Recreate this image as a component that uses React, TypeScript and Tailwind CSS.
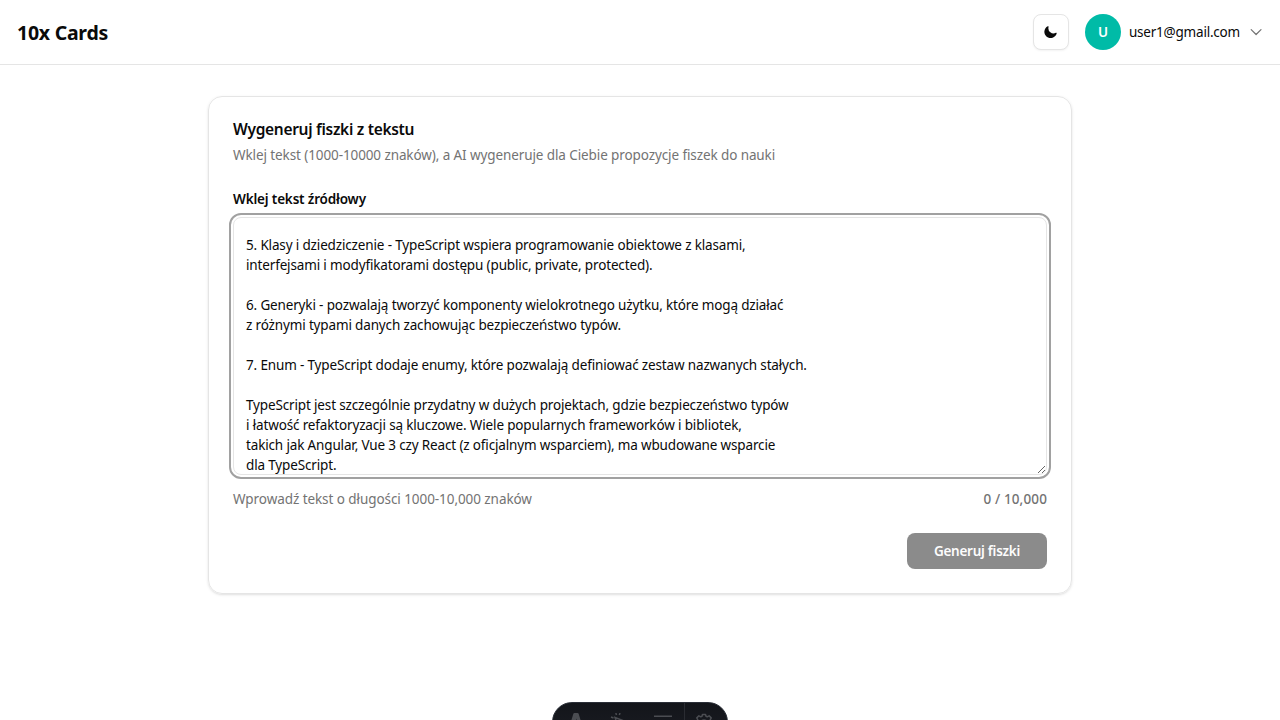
const lines = [
  '5. Klasy i dziedziczenie - TypeScript wspiera programowanie obiektowe z klasami,',
  'interfejsami i modyfikatorami dostępu (public, private, protected).',
  '',
  '6. Generyki - pozwalają tworzyć komponenty wielokrotnego użytku, które mogą działać',
  'z różnymi typami danych zachowując bezpieczeństwo typów.',
  '',
  '7. Enum - TypeScript dodaje enumy, które pozwalają definiować zestaw nazwanych stałych.',
  '',
  'TypeScript jest szczególnie przydatny w dużych projektach, gdzie bezpieczeństwo typów',
  'i łatwość refaktoryzacji są kluczowe. Wiele popularnych frameworków i bibliotek,',
  'takich jak Angular, Vue 3 czy React (z oficjalnym wsparciem), ma wbudowane wsparcie',
  'dla TypeScript.',
];

function Header() {
  return (
    <header className="flex h-[65px] items-center justify-between border-b border-[#e5e5e5] pr-4 pl-[17px]">
      <span className="pt-px text-[19.5px] leading-7 font-bold tracking-[-0.25px]">10x Cards</span>
      <div className="flex items-center gap-4">
        <button className="flex size-9 items-center justify-center rounded-lg border border-[#e5e5e5] bg-white shadow-xs">
          <svg width="16" height="16" viewBox="0.15 -1.2 21.8 21.8" fill="#0a0a0a">
            <path d="M7.455 2.004a.75.75 0 0 1 .26.77 7 7 0 0 0 9.958 7.967.75.75 0 0 1 1.067.853A8.5 8.5 0 1 1 6.647 1.921a.75.75 0 0 1 .808.083Z" />
          </svg>
        </button>
        <div className="flex items-center gap-2">
          <span className="flex size-9 items-center justify-center rounded-full bg-[#00bba7] text-[13.5px] font-semibold text-white">U</span>
          <span className="w-[111px] text-[13.5px] leading-5 tracking-[-0.22px] whitespace-nowrap">user1@gmail.com</span>
          <svg width="16" height="16" viewBox="0 0 16 16" fill="none" stroke="#737373" strokeWidth="1.2" strokeLinecap="round" strokeLinejoin="round">
            <path d="m3.2 5.6 4.9 4.9L13 5.6" />
          </svg>
        </div>
      </div>
    </header>
  );
}

function DevToolbar() {
  return (
    <div className="absolute top-[702px] left-[552px] flex h-10 w-44 overflow-hidden rounded-full border border-[#2b2f38] bg-linear-to-b from-[#13151a] to-[#1b1d24] text-[#4b4d52]">
      <span className="flex w-[46px] justify-center pt-[10px]">
        <svg width="18" height="18" viewBox="0 0 18 18" fill="currentColor"><path d="M6.2 1.2Q6.5 0 7.5 0h3Q11.500 0 11.800 1.200L16 15q-2.500-1.200-5-1.500L9.300 5.500 7.400 13.500q-3 .3-5.400 1.500Z" /></svg>
      </span>
      <span className="flex w-[42px] justify-center pt-[10px]">
        <svg width="20" height="20" viewBox="0 0 20 20" fill="none" stroke="currentColor" strokeWidth="1.5"><path d="M5 4.500l11 4.200-5 2.300-2 5ZM1 4l2.500 1M5.800 0l.7 2M10 0l-.7 2" /></svg>
      </span>
      <span className="flex w-[43px] justify-center pt-[10px]">
        <svg width="18" height="18" viewBox="0 0 18 18" fill="none" stroke="currentColor" strokeWidth="1.6"><path d="M0 3.200h18M0 9h18" /></svg>
      </span>
      <span className="flex w-[43px] border-l border-[#2a2c32] pt-[10px] pl-[10px]">
        <svg width="18" height="18" viewBox="0 0 18 18" fill="none" stroke="currentColor" strokeWidth="1.5" strokeLinejoin="round">
          <path d="M7 3.300L7.500 1.400h3L11 3.300l1.200.5 1.900-1 2.100 2.100-1 1.900.5 1.200 2 .5v3l-2 .5-.5 1.200 1 1.900-2.100 2.100-1.900-1-1.200.5-.5 1.300h-3L7 16.700l-1.200-.5-1.900 1-2.100-2.100 1-1.900-.5-1.200-2-.5v-3l2-.5.5-1.200-1-1.900 2.100-2.100 1.900 1Z" />
          <circle cx="9" cy="10" r="3" />
        </svg>
      </span>
    </div>
  );
}

export default function App() {
  return (
    <div className="relative h-[720px] overflow-hidden bg-white font-['Noto_Sans','Open_Sans',sans-serif] text-[#0a0a0a]">
      <Header />
      <main className="px-[208px] pt-[31px]">
        <section className="rounded-[14px] border border-[#e5e5e5] p-6 shadow-sm">
          <h1 className="text-[15.5px] leading-4 font-semibold tracking-[-0.3px]">Wygeneruj fiszki z tekstu</h1>
          <p className="mt-2 text-[13.5px] leading-5 tracking-[-0.1px] text-[#737373]">
            Wklej tekst (1000-10000 znaków), a AI wygeneruje dla Ciebie propozycje fiszek do nauki
          </p>
          <label htmlFor="source" className="mt-6 block text-[13.5px] leading-5 font-semibold tracking-[-0.17px]">Wklej tekst źródłowy</label>
          <textarea
            id="source"
            readOnly
            defaultValue={lines.join('\n')}
            className="mt-2 block h-[258px] w-full resize-y overflow-hidden rounded-lg border border-[#e5e5e5] px-3 pt-[17px] text-[13.5px] leading-5 tracking-[-0.15px] outline-2 outline-offset-2 outline-[#a1a1a1]"
          />
          <div className="mt-[14px] flex justify-between text-[13.5px] leading-5 text-[#737373]">
            <span className="tracking-[-0.07px]">Wprowadź tekst o długości 1000-10,000 znaków</span>
            <span className="font-medium tracking-[0.13px]">0 / 10,000</span>
          </div>
          <div className="mt-6 flex justify-end">
            <button className="h-9 w-[140px] rounded-lg bg-[#8b8b8b] text-[13.5px] leading-5 font-semibold tracking-[-0.26px] text-[#fcfcfc]">Generuj fiszki</button>
          </div>
        </section>
      </main>
      <DevToolbar />
    </div>
  );
}
